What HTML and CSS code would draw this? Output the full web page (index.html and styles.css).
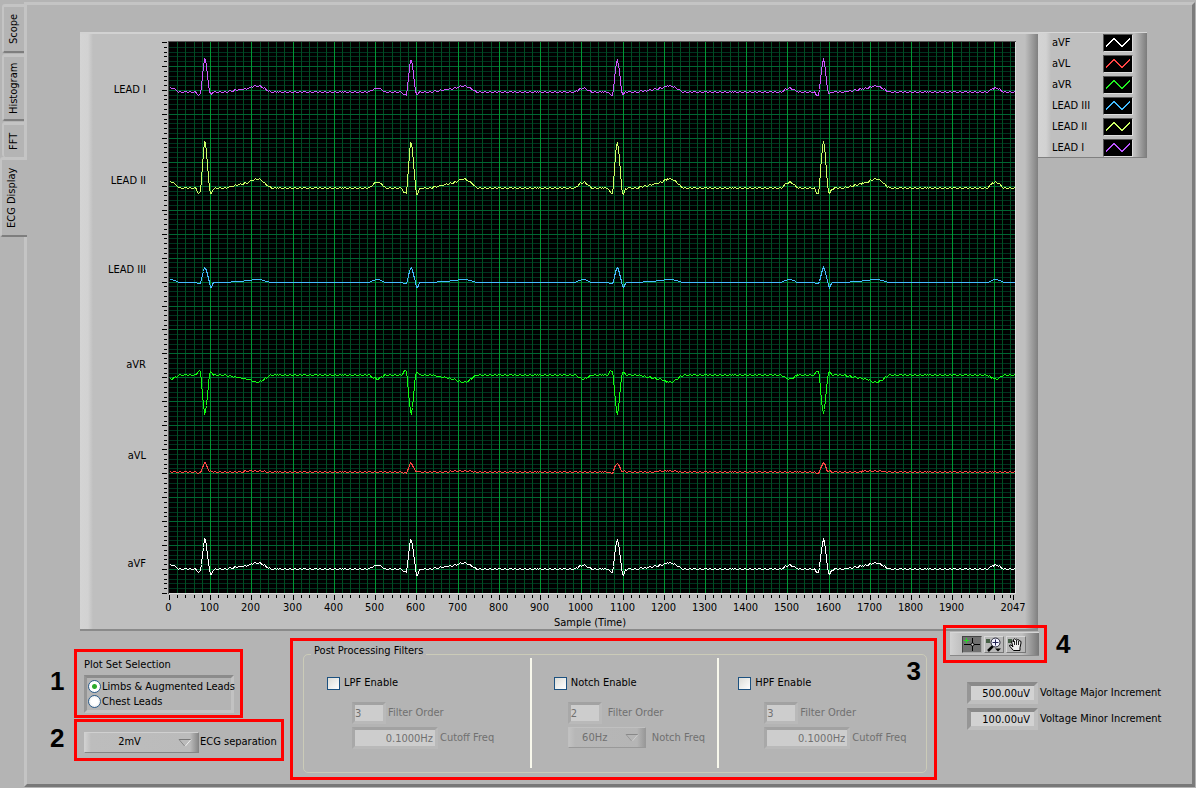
FILE: index.html
```html
<!DOCTYPE html>
<html lang="en">
<head>
<meta charset="utf-8">
<title>ECG Display</title>
<link rel="stylesheet" href="styles.css">
</head>
<body>
<nav class="tabs">
  <button class="tab tab-scope" type="button">Scope</button>
  <button class="tab tab-hist" type="button">Histogram</button>
  <button class="tab tab-fft" type="button">FFT</button>
  <button class="tab tab-ecg selected" type="button">ECG Display</button>
</nav>
<main class="page">
  <section class="graph-row">
    <div class="graph"><svg class="chart" id="chart" role="img" aria-label="ECG leads"></svg></div>
    <ul class="legend">
      <li><span>aVF</span><svg class="swatch" viewBox="0 0 28 16"><path stroke="#ffffff" d="M2 11.500l8-8 8 8 8-8"/></svg></li>
      <li><span>aVL</span><svg class="swatch" viewBox="0 0 28 16"><path stroke="#ff4444" d="M2 11.500l8-8 8 8 8-8"/></svg></li>
      <li><span>aVR</span><svg class="swatch" viewBox="0 0 28 16"><path stroke="#22ee22" d="M2 11.500l8-8 8 8 8-8"/></svg></li>
      <li><span>LEAD III</span><svg class="swatch" viewBox="0 0 28 16"><path stroke="#44bbff" d="M2 11.500l8-8 8 8 8-8"/></svg></li>
      <li><span>LEAD II</span><svg class="swatch" viewBox="0 0 28 16"><path stroke="#ccff66" d="M2 11.500l8-8 8 8 8-8"/></svg></li>
      <li><span>LEAD I</span><svg class="swatch" viewBox="0 0 28 16"><path stroke="#bb55ff" d="M2 11.500l8-8 8 8 8-8"/></svg></li>
    </ul>
  </section>
  <section class="controls">
    <div class="left">
      <div class="step">
        <b class="num">1</b>
        <div class="callout plotset">
          <div class="caption" id="ps">Plot Set Selection</div>
          <div class="radios" role="radiogroup" aria-labelledby="ps">
            <label><input type="radio" name="set" checked>Limbs &amp; Augmented Leads</label>
            <label><input type="radio" name="set">Chest Leads</label>
          </div>
        </div>
      </div>
      <div class="step">
        <b class="num">2</b>
        <div class="callout separation">
          <span class="ring">
            <select id="sep"><option>2mV</option></select>
            <svg class="arrow" viewBox="0 0 14 10"><path d="M1 1.500h12" stroke="#777"/><path d="M1 1.500l6 7" stroke="#888"/><path d="M7 8.500l6-7" stroke="#eee"/></svg>
          </span>
          <label for="sep">ECG separation</label>
        </div>
      </div>
    </div>
    <div class="callout filters">
      <fieldset>
        <legend>Post Processing Filters</legend>
        <div class="filter">
          <label class="enable"><input type="checkbox">LPF Enable</label>
          <div class="field"><input class="box order" id="lo" value="3" disabled><label for="lo">Filter Order</label></div>
          <div class="field"><input class="box freq" id="lf" value="0.1000Hz" disabled><label for="lf">Cutoff Freq</label></div>
        </div>
        <div class="filter notch">
          <label class="enable"><input type="checkbox">Notch Enable</label>
          <div class="field"><input class="box order" id="no" value="2" disabled><label for="no">Filter Order</label></div>
          <div class="field">
            <span class="ring"><select id="nf" disabled><option>60Hz</option></select>
            <svg class="arrow" viewBox="0 0 14 10"><path d="M1 1.500h12" stroke="#888"/><path d="M1 1.500l6 7" stroke="#999"/><path d="M7 8.500l6-7" stroke="#ccc"/></svg></span>
            <label for="nf">Notch Freq</label>
          </div>
        </div>
        <div class="filter hpf">
          <label class="enable"><input type="checkbox">HPF Enable</label>
          <div class="field"><input class="box order" id="ho" value="3" disabled><label for="ho">Filter Order</label></div>
          <div class="field"><input class="box freq" id="hf" value="0.1000Hz" disabled><label for="hf">Cutoff Freq</label></div>
        </div>
      </fieldset>
      <b class="num three">3</b>
    </div>
    <div class="right">
      <div class="tools">
        <div class="callout toolbox">
          <div class="palette">
            <button type="button" class="tool on" aria-label="Cursor"><svg viewBox="0 0 18 15"><path d="M1 7.500h16M9.500 1v13" stroke="#000" shape-rendering="crispEdges"/><circle cx="9.500" cy="7.500" r="1.500" fill="#ddd" stroke="#000"/><path d="M3.500 1v5M1 3.500h5" stroke="#2d2"/></svg></button>
            <button type="button" class="tool" aria-label="Zoom"><svg viewBox="0 0 18 15"><path d="M1 2h4v4H1z" fill="#465f46"/><path d="M8 9l-5 5" stroke="#000" stroke-width="2.500"/><circle cx="10.500" cy="5.500" r="4.500" fill="#f2f2ff" stroke="#223"/><path d="M7.500 5.500h6M10.500 2.500v6" stroke="#225"/><path d="M10 11.500h6l-3 3z" fill="#000"/></svg></button>
            <button type="button" class="tool" aria-label="Pan"><svg viewBox="0 0 18 15"><path d="M1 2h4v4H1z" fill="#465f46"/><path d="M6.500 13.500L2.500 9q0-1.500 1.500-1L6 10 4.500 4.500q1-1.500 2 .5V2.500q1-1.500 2 0 1-1.500 2 .5 1.500-1 2 1 2-.5 1.500 2L13 10.500v3z" fill="#eee" stroke="#000"/><path d="M7.500 4v4M9.500 3v5M11.500 4v4" stroke="#222"/></svg></button>
          </div>
        </div>
        <b class="num">4</b>
      </div>
      <div class="volts">
        <div class="field"><input class="box" id="vmaj" value="500.00uV"><label for="vmaj">Voltage Major Increment</label></div>
        <div class="field"><input class="box" id="vmin" value="100.00uV"><label for="vmin">Voltage Minor Increment</label></div>
      </div>
    </div>
  </section>
</main>
<script src="chart.js"></script>
</body>
</html>
```

FILE: styles.css
```css
* { box-sizing: border-box; }
body {
  margin: 0;
  padding: 2px 1px 1px 0;
  min-height: 100vh;
  display: flex;
  background: #b4b4b4;
  color: #000;
  font: 11px/14px "DejaVu Sans Condensed", "Noto Sans", sans-serif;
}
button, input, select { font: inherit; color: inherit; margin: 0; }

.tabs { width: 24px; flex: none; display: flex; flex-direction: column; align-items: flex-end; gap: 1px; padding-top: 2px; }
.tab {
  writing-mode: vertical-rl;
  transform: rotate(180deg);
  width: 22px;
  padding: 0;
  text-align: center;
  line-height: 20px;
  background: #b4b4b4;
  border: 0 solid #c4c4c4;
  border-top: 2px solid #7e7e7e;
  border-bottom: 3px solid #c4c4c4;
  border-right: 2px solid #c4c4c4;
  border-radius: 0 3px 3px 0;
}
.tab-scope { height: 49px; }
.tab-hist { height: 67px; }
.tab-fft { height: 35px; border-top-width: 0; }
.tab.selected { width: 27px; height: 80px; margin: -1px -3px 0 0; padding-left: 5px; position: relative; }

.page {
  flex: 1;
  min-width: 0;
  border: 3px solid;
  border-color: #c4c4c4 #7c7c7c #787878 #c4c4c4;
}
.graph-row { display: flex; align-items: flex-start; padding: 27px 45px 0 53px; }
.graph {
  flex: 1;
  min-width: 0;
  background: linear-gradient(90deg, #d4d4d4 0, #d2d2d2 8px, #bfbfbf 13px, #bfbfbf calc(100% - 13px), #808080 100%);
  border-top: 2px solid #d2d2d2;
  border-bottom: 2px solid #8a8a8a;
}
.chart { display: block; width: 100%; height: calc(100vh - 193px); min-height: 300px; font-size: 11px; }
.legend {
  list-style: none;
  margin: 0;
  width: 109px;
  padding: 0 15px 0 14px;
  background: linear-gradient(90deg, #d4d4d4 0, #d2d2d2 8px, #bfbfbf 13px, #bfbfbf calc(100% - 13px), #7c7c7c 100%);
  box-shadow: inset 0 1px #d8d8d8, inset 0 -1px #808080;
}
.legend li { display: flex; justify-content: space-between; align-items: center; height: 21px; white-space: nowrap; }
.legend span { margin-right: -10px; }
.swatch { width: 30px; height: 18px; margin-right: -1px; background: #000; fill: none; border: 1px solid; border-color: #555 #ddd #ddd #555; shape-rendering: crispEdges; }

.controls { display: flex; gap: 6px; padding-left: 23px; padding-bottom: 4px; align-items: flex-start; }
.num { font: bold 26px/26px "Liberation Sans", Arial, sans-serif; }
.callout { border: 3px solid #f00; }
.left { width: 234px; margin-top: 18px; flex: none; }
.step { display: flex; align-items: center; margin-bottom: 1px; }
.step .num { width: 24px; flex: none; padding-bottom: 5px; }
.plotset { width: 169px; height: 69px; padding: 6px 6px 0 7px; white-space: nowrap; }
.caption { margin-bottom: 3px; }
.radios { border: 3px solid; border-color: #8b8b8b #c2c2c2 #c2c2c2 #969696; background: #b4b4b4; padding: 1px 0 1px 1px; }
.radios label { display: flex; align-items: center; gap: 1px; height: 15px; margin-right: -4px; }
input[type=radio] {
  appearance: none;
  width: 13px;
  height: 13px;
  flex: none;
  border: 1px solid #2b5c8b;
  border-radius: 50%;
  background: radial-gradient(circle, #fff 40%, #ddd);
}
input[type=radio]:checked { background: radial-gradient(circle, #2aa52a 0, #2fae2f 2px, #fff 3px); }
.separation { width: 210px; height: 42px; padding: 4px 0 0 7px; display: flex; align-items: center; gap: 1px; white-space: nowrap; }
.ring { position: relative; display: inline-flex; }
.ring select {
  appearance: none;
  width: 115px;
  height: 21px;
  padding: 0 24px 0 0;
  text-align: center;
  text-align-last: center;
  border: 1px solid;
  border-color: #d0d0d0 #858585 #858585 #d0d0d0;
  border-radius: 0;
  background: linear-gradient(90deg, #d0d0d0, #bdbdbd 6px, #bbb calc(100% - 8px), #8a8a8a);
}
.arrow { position: absolute; right: 7px; top: 6px; width: 14px; height: 10px; fill: none; pointer-events: none; }

.filters { flex: 1; min-width: 0; margin-top: 7px; height: 142px; padding: 6px 7px 0 10px; position: relative; }
fieldset { margin: 0; padding: 0; border: 1px solid #cbcbb8; border-radius: 5px; height: 126px; display: flex; min-width: 0; }
legend { margin-left: 7px; padding: 0 3px 6px; line-height: 8px; }
.filter { flex: 202; min-width: 0; height: 110px; margin-top: -3px; padding: 18px 0 0 23px; border-right: 2px solid #f8f8ec; white-space: nowrap; }
.notch { flex: 163; padding-left: 22px; }
.hpf { flex: 187; padding-left: 19px; border-right: 0; }
.enable { display: flex; align-items: center; gap: 4px; height: 14px; margin-bottom: 12px; }
input[type=checkbox] { appearance: none; width: 13px; height: 13px; border: 1px solid #1c5180; background: linear-gradient(135deg, #dcdcd7, #fff); }
.field { display: flex; align-items: center; gap: 2px; }
.filter .field { padding-left: 25px; margin-bottom: 3px; color: #707070; }
.notch .field { padding-left: 14px; gap: 6px; }
.hpf .field { padding-left: 26px; }
.box {
  width: 71px;
  height: 22px;
  border: 4px solid;
  border-color: #8a8a8a #bfbfbf #bfbfbf #969696;
  background: #d2d2d2;
  padding: 0 4px 0 0;
  text-align: right;
  border-radius: 0;
}
.filter .box { border-color: #a2a2a2 #b9b9b9 #b9b9b9 #a8a8a8; color: #707070; background: #cdcdcd; padding-right: 2px; border-width: 3px; }
.filter .order { width: 34px; text-align: left; }
.filter .freq { width: 86px; }
.notch .ring select { width: 78px; color: #707070; opacity: 1; border-color: #c0c0c0 #999 #999 #c0c0c0; background: linear-gradient(90deg, #c2c2c2, #b7b7b7 6px, #b5b5b5 calc(100% - 8px), #999); }
.three { position: absolute; right: 13px; top: 17px; }

.right { width: 249px; flex: none; margin-top: -6px; position: relative; }
.tools { display: flex; align-items: center; gap: 9px; }
.toolbox { width: 104px; height: 38px; padding: 4px 5px 4px 4px; }
.palette { display: flex; gap: 2px; height: 24px; padding: 3px 0 0 12px; background: linear-gradient(90deg, #d2d2d2, #bfbfbf 12px, #bfbfbf 72px, #777); border-top: 1px solid #d6d6d6; border-bottom: 1px solid #888; }
.tool { width: 20px; height: 17px; padding: 0; border: 1px solid; border-color: #d8d8d8 #777 #777 #d8d8d8; background: #b8b8b8; }
.tool.on { background: #707070; border-color: #444 #aaa #aaa #444; }
.tool svg { display: block; width: 18px; height: 15px; fill: none; }
.volts { padding: 19px 0 0 24px; display: grid; gap: 4px; white-space: nowrap; }
```

FILE: chart.js
```js
const svg = document.getElementById("chart");
const SAMPLES = 2047;
const BEAT = 500;
const FIRST_PEAK = 86;

// Baseline and label heights are on a 552-unit scale; wave heights are in pixels.
const leads = [
  { name: "LEAD I", label: 46, base: 50, p: -4, q: 3, r: -33, s: 2, t: -6, noise: 1, color: "#cc55ff" },
  { name: "LEAD II", label: 137, base: 146, p: -6, q: 5, r: -47, s: 6, t: -9, noise: 1, color: "#ccff66" },
  { name: "LEAD III", label: 226, base: 240, p: -3, q: 1, r: -15, s: 5, t: -3, noise: 0, color: "#44bbff" },
  { name: "aVR", label: 322, base: 334, p: 4, q: -4, r: 39, s: -3, t: 7, noise: 1, color: "#11ff11" },
  { name: "aVL", label: 413, base: 431, p: 0, q: 1, r: -9, s: -1, t: -1, noise: 1, color: "#ff4444" },
  { name: "aVF", label: 521, base: 528, p: -4, q: 3, r: -30, s: 6, t: -6, noise: 1, color: "#ffffff" }
];

// Key points of one beat: sample offset from the R peak, wave, share of its height.
const beat = [
  [-102, "p", 0], [-90, "p", 0.8], [-80, "p", 1], [-70, "p", 0.5], [-63, "p", 0],
  [-22, "q", 0], [-17, "q", 1], [-11, "q", 1], [-9, "r", 0.1], [-6, "r", 0.5], [-1, "r", 1],
  [2, "r", 0.95], [5, "r", 0.65], [8, "r", 0.3], [11, "s", 0], [13, "s", 1], [16, "s", 0.9], [20, "s", 0.1],
  [48, "t", 0], [85, "t", 0.4], [108, "t", 0.65], [116, "t", 0.9], [126, "t", 1], [134, "t", 0.95],
  [142, "t", 0.7], [156, "t", 0.1], [164, "t", 0]
];

function wave(lead, sample) {
  let d = (sample - FIRST_PEAK) % BEAT;
  if (d < -102) d += BEAT;
  if (d > BEAT - 102) d -= BEAT;
  for (let i = 1; i < beat.length; i++) {
    const a = beat[i - 1], b = beat[i];
    if (d >= a[0] && d <= b[0]) {
      const from = lead[a[1]] * a[2], to = lead[b[1]] * b[2];
      return from + (to - from) * (d - a[0]) / (b[0] - a[0]);
    }
  }
  return 0;
}

function draw() {
  const left = 89, top = 8;
  const width = svg.clientWidth - left - 23;
  const height = svg.clientHeight - top - 36;
  const right = left + width, bottom = top + height;
  const span = width - 2;
  const X = s => left + Math.round(s / SAMPLES * span) + 0.5;
  const Y = v => top + Math.round(v / 552 * height) + 0.5;
  const path = (d, color) => `<path d="${d}" stroke="${color}"/>`;
  let minorV = "", majorV = "", minorH = "", majorH = "", ticks = "", text = "";

  for (let s = 0; s < SAMPLES; s += 20) {
    const x = X(s), major = s % 100 === 0;
    if (s > 0) {
      if (major) majorV += `M${x} ${top}V${bottom}`;
      else minorV += `M${x} ${top}V${bottom}`;
    }
    ticks += `M${x} ${bottom + 2}v${major ? 5 : 3}`;
    if (major && s < 2000) text += `<text x="${x - 1}" y="${bottom + 18}" text-anchor="middle">${s}</text>`;
  }
  ticks += `M${X(SAMPLES)} ${bottom + 2}v5`;
  text += `<text x="${right - 2}" y="${bottom + 18}" text-anchor="middle">2047</text>`;
  text += `<text x="${left + width / 2 - 2}" y="${bottom + 33}" text-anchor="middle">Sample (Time)</text>`;

  for (let i = 0; i <= 115; i++) {
    const y = Y(i * 4.8), major = i % 5 === 0;
    if (i > 0 && i < 115) {
      if (major) majorH += `M${left} ${y}H${right}`;
      else minorH += `M${left} ${y}H${right}`;
    }
    ticks += `M${left - 2} ${y}h${major ? -5 : -3}`;
  }

  let traces = "";
  for (const lead of leads) {
    const points = [];
    for (let x = 0; x < width; x++) {
      const jitter = lead.noise && (x % 5 < 2 || x % 13 === 4) ? 1 : 0;
      const y = Y(lead.base) + Math.round(wave(lead, x / span * SAMPLES) - jitter);
      points.push(`${left + x + 0.5} ${y}`);
    }
    traces += `<polyline points="${points.join(" ")}" stroke="${lead.color}"/>`;
    text += `<text x="66" y="${Y(lead.label) + 4}" text-anchor="end">${lead.name}</text>`;
  }

  svg.innerHTML =
    `<rect x="${left - 1}" y="${top - 1}" width="${width + 2}" height="${height + 2}" fill="#555"/>` +
    `<rect x="${left}" y="${top}" width="${width + 1}" height="${height + 1}" fill="#ddd"/>` +
    `<rect x="${left}" y="${top}" width="${width}" height="${height}" fill="#000"/>` +
    `<g fill="none" shape-rendering="crispEdges">` +
    path(minorH, "#00331f") + path(minorV, "#004d22") + path(majorH, "#006633") +
    path(majorV, "#009933") + path(ticks, "#000") + traces + `</g><g>${text}</g>`;
}

draw();
window.addEventListener("resize", draw);
```
